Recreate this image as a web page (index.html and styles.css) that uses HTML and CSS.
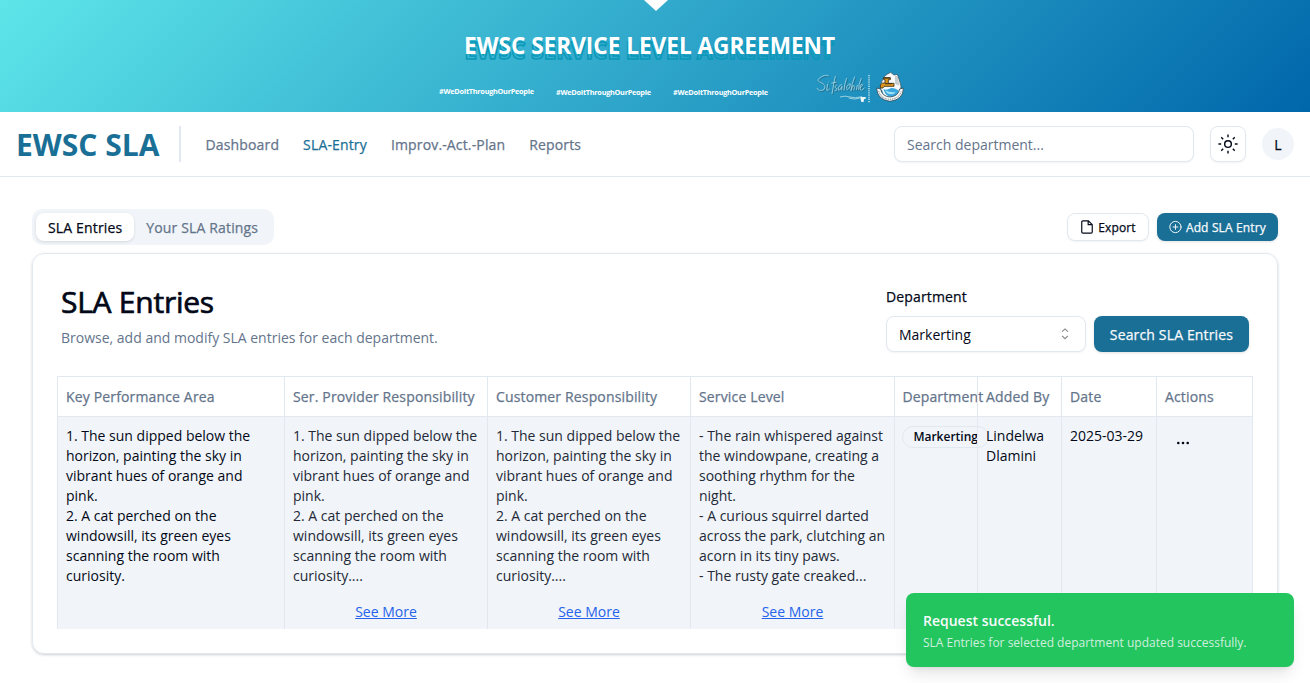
FILE: index.html
```html
<!DOCTYPE html>
<html lang="en">
<head>
<meta charset="utf-8">
<title>EWSC SLA</title>
<link rel="stylesheet" href="styles.css">
</head>
<body>
<svg class="banner" width="1310" height="112" viewBox="0 0 1310 112">
  <defs>
    <linearGradient id="sea" gradientUnits="userSpaceOnUse" x1="300" y1="-299" x2="1010" y2="411">
      <stop offset="0" stop-color="#5de5e9"/>
      <stop offset="1" stop-color="#0067ab"/>
    </linearGradient>
    <path id="signature" d="M38 18C25 10 0 28 8 34s22 8 18 20-22 8-23 0M35 42l-3 18q5 4 9-4M38 35v2M58 18Q52 45 48 72M46 40l16-4M62 44q-10 8-2 11t-4 8M78 44q-12 2-11 13t11-8l-1 12M92 24q-8 22-8 38M98 44q-9 4-6 12t9-6-3-6M116 20q-9 22-11 42 6-20 9-15t-1 14M124 45l-3 15M136 24q-10 24-8 36M131 54q13-10 7-11t-5 12 12-2"/>
  </defs>
  <rect width="1310" height="112" fill="url(#sea)"/>
  <path d="M644 0h24l-12 11z" fill="#fff"/>
  <g class="banner-title">
    <text class="title-shadow" x="464.500" y="59" textLength="369" lengthAdjust="spacingAndGlyphs">EWSC SERVICE LEVEL AGREEMENT</text>
    <text x="464" y="53.500" textLength="371" lengthAdjust="spacingAndGlyphs">EWSC SERVICE LEVEL AGREEMENT</text>
  </g>
  <g class="hashtags">
    <text x="439" y="93.700" textLength="95">#WeDoItThroughOurPeople</text>
    <text x="556" y="94.700" textLength="95">#WeDoItThroughOurPeople</text>
    <text x="673" y="95.300" textLength="95">#WeDoItThroughOurPeople</text>
  </g>
  <g transform="translate(816 70) scale(.3333)">
    <use href="#signature" x="3" y="3" fill="none" stroke="#24667f" stroke-width="2.200"/>
    <use href="#signature" fill="none" stroke="#b3dce6" stroke-width="2.200"/>
    <path d="M72 81q15-5 30 0t36-1M98 84q18 7 38-1" fill="none" stroke="#b3dce6" stroke-width="2.500"/>
    <path d="M134 81h15v6h-5l-1 9h-7l-2-7z" fill="#edf7f9"/>
    <path d="M159 15v84" stroke="#d4edf3" stroke-width="4" stroke-dasharray="3.500 3"/>
    <path d="M194 62q-3-18 5-31 3-12 14-18l11-6 10 8 10-2 7 20q7 17 2 31z" fill="#f6f8f9" stroke="#27424d" stroke-width="2"/>
    <path d="M237 16l8 3 5 27-13-2z" fill="#c4ccd0"/>
    <circle cx="224" cy="61" r="25" fill="#f6f8f9"/>
    <path d="M202 57q8 5 18-1t27 5q1 18-20 20-18 0-25-24z" fill="#39a8df"/>
    <path d="M207 61q18 9 33 4-10 13-26 5z" fill="#a5e3f5"/>
    <path d="M203 23h20v6h-6v11h17v9h-30l-3 5h-8v-9l7-6h7v-10h-4z" fill="#dc961d" stroke="#3d3018" stroke-width="2.500"/>
    <path d="M201 24h22M207 41h21" stroke="#342b20" stroke-width="3"/>
    <path d="M182 54l12 3q3 22 28 24 25-2 29-24l11-3q1 35-40 40-39-5-40-40z" fill="#fafafa" stroke="#203f4c" stroke-width="2.300"/>
    <path d="M188 63q6 23 34 25 28-2 34-25" fill="none" stroke="#8c969a" stroke-width="3.500" stroke-dasharray="3 2"/>
  </g>
</svg>

<header class="navbar">
  <div class="brand">EWSC SLA</div>
  <nav class="nav-links medium">
    <a>Dashboard</a><a class="current">SLA-Entry</a><a>Improv.-Act.-Plan</a><a>Reports</a>
  </nav>
  <div class="nav-tools">
    <div class="search">Search department...</div>
    <button class="theme" aria-label="Theme">
      <svg width="20" height="20" viewBox="0 0 24 24" fill="none" stroke="currentColor" stroke-width="1.700"><circle cx="12" cy="12" r="4"/><path d="M12 .5v3.300m0 16.400v3.300M.5 12h3.300m16.400 0h3.300M3.900 3.900l2.300 2.300m11.600 11.600 2.300 2.300M3.900 20.100l2.300-2.300M17.800 6.200l2.300-2.300"/></svg>
    </button>
    <div class="avatar medium">L</div>
  </div>
</header>

<main class="page">
  <div class="toolbar">
    <div class="tabs medium"><div class="tab active">SLA Entries</div><div class="tab">Your SLA Ratings</div></div>
    <div class="toolbar-actions">
      <button class="btn outline medium">
        <svg width="14" height="14" viewBox="0 0 24 24" fill="none" stroke="currentColor" stroke-width="2" stroke-linecap="round" stroke-linejoin="round"><path d="M14.500 1.500H5a2 2 0 0 0-2 2v17a2 2 0 0 0 2 2h14a2 2 0 0 0 2-2V8zM14 1.500V8h7"/></svg><span>Export</span></button>
      <button class="btn solid small medium">
        <svg width="14" height="14" viewBox="0 0 24 24" fill="none" stroke="currentColor" stroke-width="1.800" stroke-linecap="round"><circle cx="12" cy="12" r="10.500"/><path d="M7.500 12h9M12 7.500v9"/></svg><span>Add SLA Entry</span></button>
    </div>
  </div>

  <section class="card">
    <div class="card-head">
      <div>
        <h1>SLA Entries</h1>
        <p>Browse, add and modify SLA entries for each department.</p>
      </div>
      <div class="filter">
        <div class="field">
          <label class="medium">Department</label>
          <div class="select">Markerting
            <svg width="16" height="16" viewBox="0 0 16 16" fill="none" stroke="#84868c" stroke-width="1.100"><path d="M5.100 6.700 8 3.900l2.900 2.800M5.100 10.900 8 13.700l2.900-2.800"/></svg>
          </div>
        </div>
        <button class="btn solid large medium"><span>Search SLA Entries</span></button>
      </div>
    </div>
    <div class="grid">
      <div class="cell head medium">Key Performance Area</div>
      <div class="cell head medium">Ser. Provider Responsibility</div>
      <div class="cell head medium">Customer Responsibility</div>
      <div class="cell head medium">Service Level</div>
      <div class="cell head medium dept">Department</div>
      <div class="cell head medium">Added By</div>
      <div class="cell head medium">Date</div>
      <div class="cell head medium">Actions</div>

      <div class="cell">1. The sun dipped below the<br>horizon, painting the sky in<br>vibrant hues of orange and<br>pink.<br>2. A cat perched on the<br>windowsill, its green eyes<br>scanning the room with<br>curiosity.</div>
      <div class="cell long">1. The sun dipped below the<br>horizon, painting the sky in<br>vibrant hues of orange and<br>pink.<br>2. A cat perched on the<br>windowsill, its green eyes<br>scanning the room with<br>curiosity....<a class="more">See More</a></div>
      <div class="cell long">1. The sun dipped below the<br>horizon, painting the sky in<br>vibrant hues of orange and<br>pink.<br>2. A cat perched on the<br>windowsill, its green eyes<br>scanning the room with<br>curiosity....<a class="more">See More</a></div>
      <div class="cell long">- The rain whispered against<br>the windowpane, creating a<br>soothing rhythm for the<br>night.<br>- A curious squirrel darted<br>across the park, clutching an<br>acorn in its tiny paws.<br>- The rusty gate creaked...<a class="more">See More</a></div>
      <div class="cell dept"><span class="badge">Markerting</span></div>
      <div class="cell">Lindelwa<br>Dlamini</div>
      <div class="cell">2025-03-29</div>
      <div class="cell"><svg class="dots" width="16" height="16" viewBox="0 0 16 16" fill="currentColor"><circle cx="3.300" cy="8" r="1.300"/><circle cx="8" cy="8" r="1.300"/><circle cx="12.700" cy="8" r="1.300"/></svg></div>
    </div>
  </section>
</main>

<div class="toast">
  <div class="toast-title">Request successful.</div>
  <div class="toast-text">SLA Entries for selected department updated successfully.</div>
</div>
</body>
</html>
```
FILE: styles.css
```css
* { box-sizing: border-box; }
body {
  margin: 0;
  height: 683px;
  overflow: hidden;
  background: #fff;
  color: #020817;
  font: 14px/20px "Open Sans", sans-serif;
}
button { font: inherit; color: inherit; }
.medium { letter-spacing: .15px; -webkit-text-stroke: .25px currentColor; }
.banner { display: block; }
.banner-title { font-size: 22.5px; font-weight: 700; fill: #fff; }
.banner-title .title-shadow { fill: none; stroke: #0898b8; stroke-width: 1.5; }
.hashtags { font-size: 7.3px; font-weight: 700; fill: #fff; }

.navbar {
  height: 65px;
  display: flex;
  align-items: center;
  padding: 0 16px;
  border-bottom: 1px solid #e2e8f0;
}
.brand {
  width: 165px;
  height: 36px;
  border-right: 2px solid #e2e8f0;
  color: #1a6f96;
  font-size: 30px;
  line-height: 38px;
  font-weight: 700;
  white-space: nowrap;
}
.nav-links { display: flex; gap: 24px; margin-left: 24.5px; padding-top: 2px; color: #64748b; }
.nav-links .current { color: #1a6f96; }
.nav-tools { display: flex; align-items: center; gap: 16px; margin-left: auto; }
.search, .theme, .select, .btn.outline {
  border: 1px solid #e2e8f0;
  background: #fff;
  box-shadow: 0 1px 2px rgba(0, 0, 0, .05);
}
.search { width: 300px; height: 36px; padding: 8px 12px; border-radius: 8px; color: #64748b; }
.theme { width: 36px; height: 36px; padding: 0 1px 1px 0; border-radius: 8px; display: flex; align-items: center; justify-content: center; }
.avatar { width: 32px; height: 32px; border-radius: 50%; background: #f1f5f9; text-align: center; line-height: 33px; }

.page { padding: 32px; }
.toolbar { display: flex; justify-content: space-between; align-items: center; height: 36px; }
.tabs { display: flex; height: 36px; padding: 4px; border-radius: 10px; background: #f1f5f9; color: #64748b; }
.tab { height: 28px; padding: 5px 12px 3px; border-radius: 8px; }
.tab.active { background: #fff; color: #020817; box-shadow: 0 1px 3px rgba(0, 0, 0, .12); }
.toolbar-actions { display: flex; gap: 8px; }
.btn { display: flex; align-items: center; justify-content: center; gap: 4px; height: 28px; padding: 0 12px; border: 0; border-radius: 8px; font-size: 12px; white-space: nowrap; }
.btn span { padding-top: 2px; }
.btn.outline { width: 82px; }
.btn.solid { background: #1a6f96; color: #f8fafc; box-shadow: 0 1px 3px rgba(0, 0, 0, .12); }
.btn.small { width: 121px; }
.btn.large { width: 155px; height: 36px; font-size: 14px; }

.card {
  margin-top: 8px;
  height: 401px;
  padding: 24px;
  border: 1px solid #e2e8f0;
  border-radius: 12px;
  box-shadow: 0 1px 3px rgba(0, 0, 0, .12), 0 1px 2px rgba(0, 0, 0, .08);
}
.card-head { display: flex; justify-content: space-between; height: 98px; padding: 4px 4px 0; }
h1 { margin: 2px 0 0; font-size: 30px; line-height: 36px; font-weight: 400; letter-spacing: -.25px; -webkit-text-stroke: .7px currentColor; }
.card-head p { margin: 8px 0 0; color: #64748b; }
.filter { display: flex; gap: 8px; align-items: flex-end; height: 70px; }
.field label { display: block; margin-bottom: 9px; }
.select { width: 200px; height: 36px; padding: 8px 12px; border-radius: 8px; display: flex; justify-content: space-between; }

.grid {
  display: grid;
  grid-template-columns: 227px 203px 203px 204px 83px 84px 95px 96px;
  grid-template-rows: 40px 212px;
  width: 1196px;
  border-top: 1px solid #e2e8f0;
  border-right: 1px solid #e2e8f0;
  background: linear-gradient(#fff 40px, #f1f5f9 40px);
}
.cell { min-width: 0; padding: 9px 8px; border-left: 1px solid #e2e8f0; white-space: nowrap; }
.cell.head { padding: 10px 8px; color: #64748b; border-bottom: 1px solid #e2e8f0; }
.cell.long { color: #232937; }
.cell.dept { padding-left: 7.4px; }
.more { display: block; margin-top: 16px; color: #2563eb; text-align: center; text-decoration: underline; }
.badge { display: inline-block; height: 22px; padding: 2px 10px; border: 1px solid #e2e8f0; border-radius: 11px; font-size: 12px; line-height: 16px; font-weight: 600; }
.dots { display: block; margin: 9px 0 0 10px; }

.toast {
  position: absolute;
  right: 16px;
  bottom: 16px;
  width: 388px;
  height: 74px;
  padding: 18px 17px 16px;
  border-radius: 8px;
  background: #22c55e;
  color: #f8fafc;
  box-shadow: 0 10px 15px -3px rgba(0, 0, 0, .1), 0 4px 6px -4px rgba(0, 0, 0, .1);
}
.toast-title { font-weight: 600; }
.toast-text { margin-top: 4px; font-size: 12px; line-height: 16px; opacity: .8; }
```
